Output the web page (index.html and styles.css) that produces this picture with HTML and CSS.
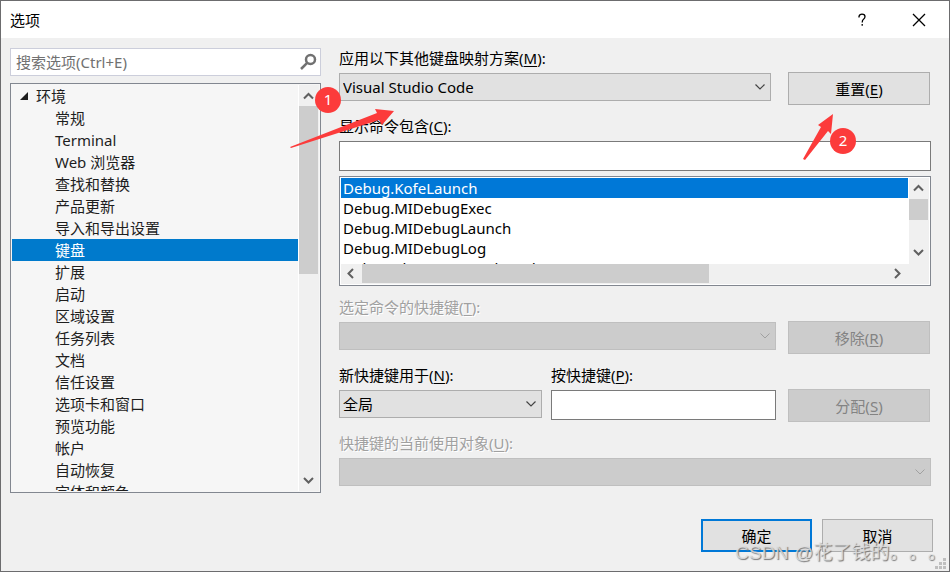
FILE: index.html
```html
<!DOCTYPE html>
<html lang="zh-CN">
<head>
    <meta charset="UTF-8">
    <meta name="viewport" content="width=device-width, initial-scale=1.0">
    <title>选项</title>
    <link rel="stylesheet" href="styles.css">
</head>
<body>
    <div class="window">
        <header class="titlebar">
            <h1>选项</h1>
            <button class="caption-btn" type="button" aria-label="帮助">
                <svg width="14" height="14" viewBox="0 0 14 14"><path d="M5 4.500V3.500Q5.500 1.200 8 1.200Q11 1.200 11 3.800Q11 5.200 9.500 6.300Q8.200 7.200 8.200 9.500M8.200 11V12.800" /></svg>
            </button>
            <button class="caption-btn" type="button" aria-label="关闭">
                <svg width="14" height="14" viewBox="0 0 14 14"><path d="M1 1L13 13M13 1L1 13" /></svg>
            </button>
        </header>

        <main class="content">
            <section class="sidebar">
                <div class="search">
                    <input type="text" placeholder="搜索选项(Ctrl+E)" aria-label="搜索选项">
                    <svg width="18" height="18" viewBox="0 0 18 18"><circle cx="11.500" cy="6.500" r="4.500" /><path d="M8.200 9.800L2 16" /></svg>
                </div>

                <div class="tree">
                    <ul class="tree-items" role="tree">
                        <li class="root" role="treeitem" aria-expanded="true">环境</li>
                        <li role="treeitem">常规</li>
                        <li role="treeitem">Terminal</li>
                        <li role="treeitem">Web 浏览器</li>
                        <li role="treeitem">查找和替换</li>
                        <li role="treeitem">产品更新</li>
                        <li role="treeitem">导入和导出设置</li>
                        <li class="selected" role="treeitem" aria-selected="true">键盘</li>
                        <li role="treeitem">扩展</li>
                        <li role="treeitem">启动</li>
                        <li role="treeitem">区域设置</li>
                        <li role="treeitem">任务列表</li>
                        <li role="treeitem">文档</li>
                        <li role="treeitem">信任设置</li>
                        <li role="treeitem">选项卡和窗口</li>
                        <li role="treeitem">预览功能</li>
                        <li role="treeitem">帐户</li>
                        <li role="treeitem">自动恢复</li>
                        <li role="treeitem">字体和颜色</li>
                    </ul>
                    <div class="scrollbar vertical">
                        <svg width="20" height="21" viewBox="0 0 20 21"><path d="M5 13.500L9.500 9L14 13.500" /></svg>
                        <div class="track"><div class="thumb tree-thumb"></div></div>
                        <svg width="20" height="20" viewBox="0 0 20 20"><path d="M5 7L9.500 11.500L14 7" /></svg>
                    </div>
                </div>
            </section>

            <section class="settings">
                <label for="scheme">应用以下其他键盘映射方案(<u>M</u>):</label>
                <div class="row scheme-row">
                    <select id="scheme"><option>Visual Studio Code</option></select>
                    <button class="btn" type="button">重置(<u>E</u>)</button>
                </div>

                <label for="filter">显示命令包含(<u>C</u>):</label>
                <input id="filter" class="textbox" type="text">

                <div class="listbox">
                    <ul role="listbox" aria-label="命令">
                        <li class="selected" role="option" aria-selected="true">Debug.KofeLaunch</li>
                        <li role="option">Debug.MIDebugExec</li>
                        <li role="option">Debug.MIDebugLaunch</li>
                        <li role="option">Debug.MIDebugLog</li>
                        <li role="option">Debug.ShowCurrentThread</li>
                    </ul>
                    <div class="scrollbar vertical">
                        <svg width="20" height="21" viewBox="0 0 20 21"><path d="M5 12.500L9.500 8L14 12.500" /></svg>
                        <div class="track"><div class="thumb list-thumb"></div></div>
                        <svg width="20" height="20" viewBox="0 0 20 20"><path d="M5 6L9.500 10.500L14 6" /></svg>
                    </div>
                    <div class="scrollbar horizontal">
                        <svg width="21" height="20" viewBox="0 0 21 20"><path d="M12 5L7.500 9.500L12 14" /></svg>
                        <div class="track"><div class="thumb"></div></div>
                        <svg width="20" height="20" viewBox="0 0 20 20"><path d="M7 5L11.500 9.500L7 14" /></svg>
                    </div>
                </div>

                <label class="off" for="shortcuts">选定命令的快捷键(<u>T</u>):</label>
                <div class="row">
                    <select id="shortcuts" disabled><option></option></select>
                    <button class="btn" type="button" disabled>移除(<u>R</u>)</button>
                </div>

                <div class="row">
                    <div class="pair">
                        <label for="scope">新快捷键用于(<u>N</u>):</label>
                        <label for="press">按快捷键(<u>P</u>):</label>
                    </div>
                </div>
                <div class="row">
                    <div class="pair">
                        <select id="scope"><option>全局</option></select>
                        <input id="press" class="textbox" type="text">
                    </div>
                    <button class="btn" type="button" disabled>分配(<u>S</u>)</button>
                </div>

                <label class="off" for="used">快捷键的当前使用对象(<u>U</u>):</label>
                <select id="used" disabled><option></option></select>
            </section>
        </main>

        <footer class="actions">
            <button class="btn default" type="button">确定</button>
            <button class="btn" type="button">取消</button>
        </footer>

        <svg class="grip" width="11" height="11" viewBox="0 0 11 11"><path d="M8 0h3v3h-3zM4 4h3v3h-3zM8 4h3v3h-3zM0 8h3v3h-3zM4 8h3v3h-3zM8 8h3v3h-3z" /></svg>

        <!-- numbered callouts -->
        <svg class="arrow" id="arrow-1" width="106" height="42" viewBox="0 0 106 42"><path d="M0 39L87 5L85 1L104 3L92 17L89 12L1 40Z" /></svg>
        <span class="badge badge-1">1</span>
        <svg class="arrow" id="arrow-2" width="32" height="48" viewBox="0 0 32 48"><path d="M0 45L18 13L15 11L30 0L28 20L25 17L2 46Z" /></svg>
        <span class="badge badge-2">2</span>
        <span class="watermark">CSDN @花了钱的。。。</span>
    </div>
</body>
</html>
```
FILE: styles.css
```css
* {
    box-sizing: border-box;
}
body {
    margin: 0;
    font: 15px/20px "Noto Sans", "Noto Sans CJK SC", sans-serif;
    color: #000;
}
button, input, select {
    font: inherit;
    color: inherit;
    border-radius: 0;
}
ul {
    list-style: none;
    margin: 0;
    padding: 0;
}
u {
    text-underline-offset: 2px;
}
svg {
    display: block;
    flex: none;
    fill: none;
}

.window {
    position: relative;
    display: flex;
    flex-direction: column;
    height: 100vh;
    border: 1px solid #6c6c6e;
    background: #f0f0f0;
    overflow: hidden;
}
.titlebar {
    display: flex;
    align-items: center;
    height: 37px;
    padding: 0 1px 0 9px;
    background: #fff;
}
.titlebar h1 {
    flex: 1;
    margin: 0;
    font-size: 15px;
    font-weight: normal;
}
.caption-btn {
    display: flex;
    align-items: center;
    justify-content: center;
    width: 58px;
    height: 37px;
    padding: 0;
    border: 0;
    background: none;
}
.caption-btn svg {
    stroke: #000;
    stroke-width: 1.3;
}
.content {
    flex: 1;
    min-height: 0;
    display: grid;
    grid-template-columns: 311px 1fr;
    gap: 18px;
    padding: 10px 18px 0 9px;
}

/* left side */
.sidebar {
    display: flex;
    flex-direction: column;
    gap: 7px;
    min-height: 0;
}
.search {
    display: flex;
    align-items: center;
    height: 28px;
    padding: 0 3px 0 5px;
    border: 1px solid #cccedb;
    background: #fff;
}
.search input {
    flex: 1;
    min-width: 0;
    padding: 0;
    border: 0;
    outline: 0;
    background: none;
}
.search input::placeholder {
    color: #717171;
    opacity: 1;
}
.search svg {
    stroke: #717171;
    stroke-width: 2.5;
}
.tree {
    flex: 1;
    min-height: 0;
    display: flex;
    padding: 1px;
    border: 1px solid #828790;
    background: #f6f6f6;
}
.tree-items {
    flex: 1;
    overflow: hidden;
    border-right: 1px solid #fff;
    color: #1e1e1e;
}
.tree-items li {
    height: 22px;
    padding-left: 43px;
    line-height: 22px;
}
.tree-items .root {
    display: flex;
    align-items: center;
    gap: 8px;
    padding-left: 8px;
}
.root::before {
    content: "";
    width: 8px;
    height: 8px;
    background: #1e1e1e;
    clip-path: polygon(100% 0, 100% 100%, 0 100%);
}
.tree-items .selected {
    background: #007acc;
    color: #fff;
}

/* scroll bars */
.scrollbar {
    display: flex;
    background: #f0f0f0;
}
.scrollbar svg {
    stroke: #606060;
    stroke-width: 2;
}
.scrollbar .track {
    flex: 1;
}
.vertical {
    flex-direction: column;
    width: 20px;
}
.vertical .thumb {
    width: 19px;
}
.horizontal .thumb {
    width: 66%;
    height: 19px;
}
.thumb {
    background: #cdcdcd;
}
.tree-thumb {
    height: 168px;
}
.list-thumb {
    height: 21px;
}

/* right side */
.settings {
    display: flex;
    flex-direction: column;
    min-width: 0;
}
.settings label {
    margin: 11px 0 4px;
}
.settings > label:first-child {
    margin-top: 0;
}
.settings .off {
    color: #a0a0a0;
    text-shadow: 1px 1px #fff;
}
.row {
    display: grid;
    grid-template-columns: 1fr 142px;
    align-items: start;
    gap: 12px;
    padding-right: 1px;
}
.scheme-row {
    gap: 17px;
}
.pair {
    display: grid;
    grid-template-columns: 203fr 225fr;
    gap: 9px;
}
select {
    appearance: none;
    width: 100%;
    height: 28px;
    margin: 1px 0 0;
    padding: 0 3px;
    border: 1px solid #adadad;
    background: #e1e1e1;
    background-image: url("data:image/svg+xml,%3Csvg xmlns='http://www.w3.org/2000/svg' width='10' height='6'%3E%3Cpath d='M.5 .5L5 5L9.500 .5' fill='none' stroke='%23444' stroke-width='1.2'/%3E%3C/svg%3E");
    background-repeat: no-repeat;
    background-position: right 5px center;
}
select:disabled {
    border-color: #bfbfbf;
    background-color: #ccc;
    background-image: url("data:image/svg+xml,%3Csvg xmlns='http://www.w3.org/2000/svg' width='10' height='6'%3E%3Cpath d='M.5 .5L5 5L9.500 .5' fill='none' stroke='%23a0a0a0'/%3E%3C/svg%3E");
    opacity: 1;
}
.textbox {
    width: 100%;
    height: 30px;
    margin: 1px 0 0;
    padding: 0 3px;
    border: 1px solid #7a7a7a;
    background: #fff;
}
.btn {
    height: 33px;
    padding: 0;
    border: 1px solid #adadad;
    background: #e1e1e1;
}
.btn:disabled {
    border-color: #bfbfbf;
    background: #ccc;
    color: #838383;
}
.btn.default {
    border: 2px solid #0078d7;
}
.listbox {
    display: grid;
    grid-template: 86px 20px / 1fr 20px;
    margin-top: 5px;
    padding: 1px;
    border: 1px solid #828790;
    background: #fff;
}
.listbox ul {
    overflow: hidden;
    margin-right: 1px;
}
.listbox li {
    height: 20px;
    padding-left: 2px;
}
.listbox .selected {
    background: #0078d7;
    color: #fff;
}
.horizontal {
    grid-column: 1 / 3;
    padding-right: 21px;
}

.actions {
    display: flex;
    justify-content: flex-end;
    gap: 10px;
    padding: 26px 16px 19px;
}
.actions .btn {
    width: 111px;
}

/* things lying over the dialog */
.grip {
    position: absolute;
    right: 3px;
    bottom: 2px;
    fill: #bfbfbf;
}
.arrow {
    position: absolute;
    fill: #fc3b3b;
}
#arrow-1 {
    left: 289px;
    top: 107px;
}
#arrow-2 {
    left: 802px;
    top: 113px;
}
.badge {
    position: absolute;
    width: 26px;
    height: 26px;
    border-radius: 50%;
    background: #fc3b3b;
    color: #fff;
    line-height: 25px;
    text-align: center;
}
.badge-1 {
    left: 314px;
    top: 86px;
}
.badge-2 {
    left: 829px;
    top: 127px;
}
.watermark {
    position: absolute;
    left: 734px;
    bottom: 6px;
    font: 19px/24px "Liberation Sans", "Noto Sans CJK SC", sans-serif;
    text-spacing-trim: space-all;
    color: rgba(225, 225, 225, 0.8);
    text-shadow: 1px 1px 1px #777;
    white-space: nowrap;
    pointer-events: none;
}
```
